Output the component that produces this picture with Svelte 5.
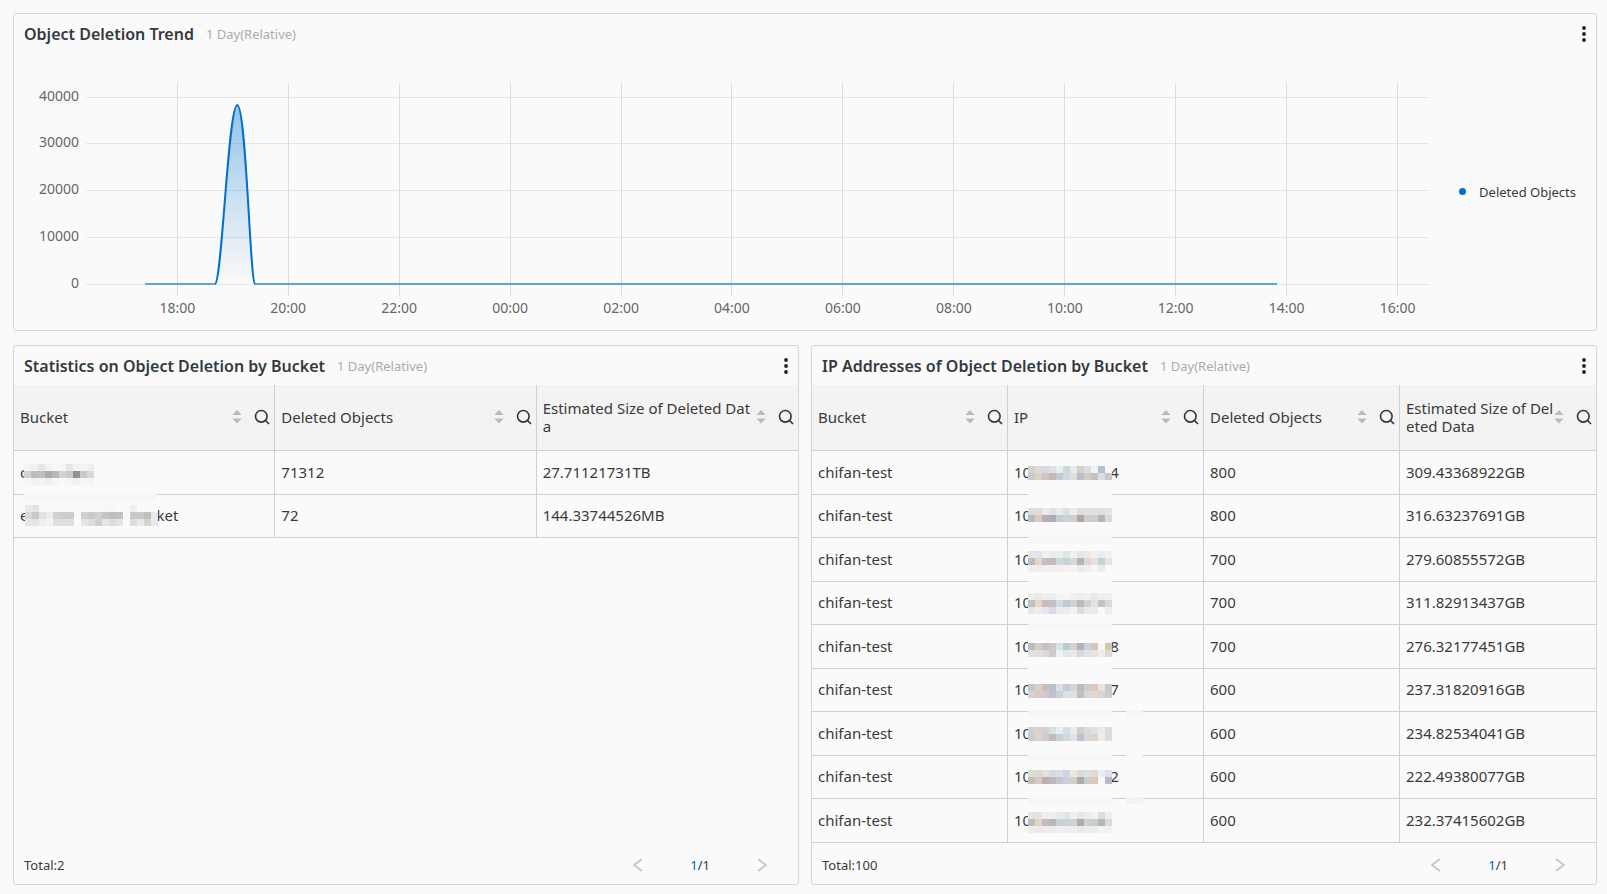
<script lang="ts">
	interface Mosaic {
		y: number;
		rows: string[];
		cover?: number;
		band?: string;
		patch?: string;
	}

	interface Cell {
		text: string;
		mosaic?: Mosaic;
		tail?: string;
	}

	const BG = '#fafafa';
	const BLOCK = 7;
	const ROW = 44;

	let chartWidth = $state(1414);

	const plotLeft = 72;
	const plotWidth = $derived(chartWidth - plotLeft);

	const yTicks = [
		{ label: '40000', y: 44 },
		{ label: '30000', y: 90 },
		{ label: '20000', y: 137 },
		{ label: '10000', y: 184 },
		{ label: '0', y: 231 }
	];

	const xTicks = ['18:00', '20:00', '22:00', '00:00', '02:00', '04:00', '06:00', '08:00', '10:00', '12:00', '14:00', '16:00'];

	// share of the plot width for an hour counted from 18:00
	const at = (hour: number) => plotLeft + plotWidth * (0.068 + hour * 0.0413);

	const start = $derived(at(-0.58));
	const rise = $derived(at(0.68));
	const peak = $derived(at(1.08));
	const fall = $derived(at(1.4));
	const end = $derived(at(19.83));
	const spike = $derived(
		`M${rise} 231 C${rise + 7} 229 ${peak - 9} 52 ${peak} 52 C${peak + 9} 52 ${fall - 5} 229 ${fall} 231`
	);

	const bucketHeads = ['Bucket', 'Deleted Objects', 'Estimated Size of Deleted Data'];
	const ipHeads = ['Bucket', 'IP', 'Deleted Objects', 'Estimated Size of Deleted Data'];

	const bucketRows: Cell[][] = [
		[
			{
				text: 'c',
				mosaic: {
					y: 12,
					cover: 19,
					band: '#f5f6f6',
					rows: [
						'f4f4f4 f0f0f0 e6e6e6 f2f2f2 f7f7f7 f5f5f5 e6e6e6 f2f2f2 f4f4f4 eeeeee',
						'd2d2d2 bdbdbd c0c0c0 acacac b8b8b8 d3d3d3 cacaca 929292 c8c8c8 d8d8d8',
						'f6f6f6 f3f3f3 f3f3f3 eeeeee f5f5f5 f8f8f8 f5f5f5 f0f0f0 f6f6f6 f4f4f4'
					]
				}
			},
			{ text: '71312' },
			{ text: '27.71121731TB' }
		],
		[
			{
				text: 'e',
				tail: 'ket',
				mosaic: {
					y: 10,
					rows: [
						'e8e8e8 e2e2e2 f8f8f8 fafafa f9f9f9 f9f9f9 f9f9f9 fafafa f9f9f9 fafafa f9f9f9 f7f7f7 f8f8f8 fafafa fafafa f0f0f0 f9f9f9 f8f8f8 fafafa',
						'd8d8d8 c8c8c8 e3e3e3 eeeeee d2d2d2 cdcdcd cccccc f9f9f9 d0d0d0 c9c9c9 d0d0d0 c4c4c4 bebebe c2c2c2 f9f9f9 c8c8c8 c9c9c9 bebebe e8e8e8',
						'e8e8e8 e5e5e5 eeeeee f3f3f3 e0e0e0 e0e0e0 e0e0e0 fafafa e4e4e4 dddddd cecece e4e4e4 dcdcdc e4e4e4 fafafa dddddd e8e8e8 d3d3d3 e8e8e8'
					]
				}
			},
			{ text: '72' },
			{ text: '144.33744526MB' }
		]
	];

	const mosaics: Mosaic[] = [
		{
			y: 14,
			rows: [
				'd8d0c8 dcdbdb e0d6d8 dcdfe8 e8edef cddadb e9ebea d7cfcd dbdde4 f0f3f1 b0c2d8 f8f8f8',
				'c8cccb ddd3c4 d0c6c8 c3bab4 c3cbd3 ccdbe2 e2ddd8 b9bdca cdcdce c2c3c2 dddce0 cec5c8'
			]
		},
		{
			y: 13,
			band: '#f5f6f6',
			rows: [
				'dcdcd8 dddddb eee9e3 dfe0e5 e7ebee dadee5 ededeb dddddd dedfdf dfe0e3 dddfdd e3e6e5',
				'bcbdba d8cbc7 bbadb7 aaadb7 c7cccd c5d5d9 d7cdc5 aca8a5 cecdcf cdcdd1 b2b7ba d8dcdf'
			]
		},
		{
			y: 12,
			rows: [
				'ece2dd e3e4e9 eff0ef eaeaec eeeded dfe4e7 f1f0ef ece2e2 eaeaed f6eee8 e6eef5 eff2f3',
				'babfbb e3d7c7 cabbc0 bebcc0 ccd8de c5d4db dfd5d0 b0b5b9 d7d9dc e5e2df c1d3d9 e2e5ea',
				'f0efed ededed f0f0ef f3f1f0 f5ecec f2f3f3 f5f4f3 eceaec eff0ef f6f6f6 ecebec f8f8f8'
			]
		},
		{
			y: 11,
			band: '#f5f6f6',
			rows: [
				'eeeeed e9e9ea efeeed ebecee f3f4f4 f6f6f6 f0f0ef ededee f0f0ee e8e7e6 eeeeed f0f0f0',
				'bdc2bd e3d7c7 cabbc0 c0c1c4 cfdce0 bec9d3 d7d0d0 b7bcba ced4d6 e3e3e2 c1c6c3 d4d9d9',
				'ece4df eeebe8 e4e6eb dadae4 e8ecf0 e8efef f1f1ef e0dcde f0e9e2 e6ebee f9faf6 ededed'
			]
		},
		{
			y: 17,
			rows: [
				'bbbdb8 d5cdc8 cabfc7 ccc9cc d8e4e4 bccbd1 d6d1cf b4b3b8 cbd0da d6c5b7 f4f7f8 d6c6ad',
				'e2e0da e3dedb dadada cdcaca edf0ef dfe9ec eae8e7 d9d8df e0e3e5 e9e3dc f0eeec e0d7d8'
			]
		},
		{
			y: 15,
			band: '#f5f5f5',
			patch: '#f4f5f5',
			rows: [
				'c5c9c6 d9d0c9 cebdc0 b9c0cd dbe0e7 c4cbd7 dbd3ce bfbcb4 c8d0d7 dec7b9 e7e4e5 c9c9c8',
				'd9d1cd d5ccc7 cfc9cd c2bfc8 cbcfdc d7e3e5 e2e1df c0bdc7 dbd6d3 e2d7ce d8d5d9 d0cccc'
			]
		},
		{
			y: 14,
			band: '#f6f6f6',
			patch: '#f9f9f9',
			rows: [
				'd0d1cd d4d2d2 d7cfd1 d8dee5 e8eeed d6dbe3 e9ebea d4ccca dcd9d9 dee1ea f2e9e6 dddada',
				'cbcdc8 ded3ca cecacf c2bbb6 c8ced3 d0d9de e4e1dd bfbfd2 d5d7dc dfd3c6 eeeceb e1dada'
			]
		},
		{
			y: 14,
			band: '#f6f6f6',
			patch: '#f4f4f4',
			rows: [
				'dadcd6 d9d8d5 e8e1da d7d9df d7dfe8 d0d3dd ebe7e2 d9d9d9 dce0e4 e5d7cf e6eef9 dedde9',
				'c4bdba d4cac4 baaeb8 bdb8bd c4c8c8 c4d4dc d6cfc7 aeaaa8 cccccd d8c9bb f8f9f8 bbb8cb'
			]
		},
		{
			y: 12,
			rows: [
				'e8e5dc e1e3e5 eeeeed edeeee e9eaeb dfe4e6 efefef e8e5e7 eaebec f2f2ef d8dce5 eeeeee',
				'bcbfba e3d4c5 c9bac0 b5b8b7 cbcfd2 c3d4da d7cdcb acaeb4 ced1d4 cdcdc8 b1b8b8 d8dddb',
				'ededed ebebeb ededed ececea f2f0ef eeeeee efefee e9e9e9 ececec ededed f2f3f3 f2f2f2'
			]
		}
	];

	const ipData = [
		['4', '800', '309.43368922GB'],
		['', '800', '316.63237691GB'],
		['', '700', '279.60855572GB'],
		['', '700', '311.82913437GB'],
		['8', '700', '276.32177451GB'],
		['7', '600', '237.31820916GB'],
		['', '600', '234.82534041GB'],
		['2', '600', '222.49380077GB'],
		['', '600', '232.37415602GB']
	];

	const ipRows: Cell[][] = ipData.map(([tail, count, size], i) => [
		{ text: 'chifan-test' },
		{ text: '10', tail, mosaic: mosaics[i] },
		{ text: count },
		{ text: size }
	]);
</script>

{#snippet heading(title: string)}
	<header class="panel-head">
		<h2>{title}</h2>
		<span class="range">1 Day(Relative)</span>
		<button class="more" type="button" aria-label="More actions">
			<svg width="4" height="16" viewBox="0 0 4 16">
				<circle cx="2" cy="2" r="1.9" />
				<circle cx="2" cy="8" r="1.9" />
				<circle cx="2" cy="14" r="1.9" />
			</svg>
		</button>
	</header>
{/snippet}

{#snippet pixels(m: Mosaic, last: boolean)}
	{@const cols = m.rows[0].split(' ').length}
	{@const cover = (m.cover ?? cols) * BLOCK}
	<svg class="mosaic" width={cols * BLOCK} height="40" shape-rendering="crispEdges" aria-hidden="true">
		<rect y="6" width={cover} height={last ? 30 : 44} fill={BG} />
		{#if m.band}
			<rect y={ROW - 3} width={cover} height={BLOCK} fill={m.band} />
		{/if}
		{#if m.patch}
			<rect x="98" y={ROW - 3} width="17" height={BLOCK} fill={m.patch} />
		{/if}
		{#each m.rows as line, r}
			{#each line.split(' ') as color, c}
				<rect x={c * BLOCK} y={m.y + r * BLOCK} width={BLOCK} height={BLOCK} fill="#{color}" />
			{/each}
		{/each}
	</svg>
{/snippet}

{#snippet grid(heads: string[], rows: Cell[][])}
	<div class="table-wrap">
		<table>
			<thead>
				<tr>
					{#each heads as head}
						<th scope="col">
							<div class="head-cell">
								<span class="head-text">{head}</span>
								<button class="sort" type="button" aria-label="Sort by {head}">
									<svg width="10" height="14" viewBox="0 0 10 14">
										<path d="M5 0 9.7 5H0.3z M0.3 8.5H9.7L5 13.5z" />
									</svg>
								</button>
								<button class="search" type="button" aria-label="Search {head}">
									<svg width="16" height="16" viewBox="0 0 16 16">
										<circle cx="7.3" cy="7.3" r="5.8" />
										<path d="M11.5 11.5 15 15" />
									</svg>
								</button>
							</div>
						</th>
					{/each}
				</tr>
			</thead>
			<tbody>
				{#each rows as row, i}
					<tr>
						{#each row as cell}
							<td>
								{#if cell.mosaic}
									<div class="masked">
										<span>{cell.text}</span>
										{@render pixels(cell.mosaic, i === rows.length - 1)}
										{#if cell.tail}<span class="tail">{cell.tail}</span>{/if}
									</div>
								{:else}
									{cell.text}
								{/if}
							</td>
						{/each}
					</tr>
				{/each}
			</tbody>
		</table>
	</div>
{/snippet}

{#snippet footer(total: number)}
	<footer class="panel-foot">
		<span>Total:{total}</span>
		<nav class="pager" aria-label="Pages">
			<button type="button" aria-label="Previous page">
				<svg width="10" height="14" viewBox="0 0 10 14"><path d="M9 1 1 7l8 6" /></svg>
			</button>
			<span class="page"><b>1</b>/1</span>
			<button type="button" aria-label="Next page">
				<svg width="10" height="14" viewBox="0 0 10 14"><path d="m1 1 8 6-8 6" /></svg>
			</button>
		</nav>
	</footer>
{/snippet}

<main class="dashboard">
	<section class="panel">
		{@render heading('Object Deletion Trend')}
		<div class="chart">
			<div class="plot" bind:clientWidth={chartWidth}>
				<svg width="100%" height="277" role="img" aria-label="Deleted objects over one day">
					<defs>
						<linearGradient id="fill" x1="0" y1="0" x2="0" y2="1">
							<stop offset="0" stop-color="#0070cc" stop-opacity="0.4" />
							<stop offset="1" stop-color="#0070cc" stop-opacity="0" />
						</linearGradient>
					</defs>
					<g class="gridlines">
						{#each yTicks as tick}
							<line x1={plotLeft} x2={chartWidth} y1={tick.y} y2={tick.y} />
						{/each}
						{#each xTicks as _, i}
							<line class="vertical" x1={at(i * 2)} x2={at(i * 2)} y1="30" y2="243" />
						{/each}
					</g>
					{#each yTicks as tick}
						<text x="65" y={tick.y + 4} text-anchor="end">{tick.label}</text>
					{/each}
					{#each xTicks as label, i}
						<text x={at(i * 2)} y="260" text-anchor="middle">{label}</text>
					{/each}
					<path d="{spike} Z" fill="url(#fill)" />
					<path class="base" d="M{start} 231H{rise} M{fall} 231H{end}" />
					<path class="curve" d={spike} />
				</svg>
			</div>
			<div class="legend">
				<span class="dot"></span>
				<span>Deleted Objects</span>
			</div>
		</div>
	</section>

	<div class="tables">
		<section class="panel">
			{@render heading('Statistics on Object Deletion by Bucket')}
			{@render grid(bucketHeads, bucketRows)}
			{@render footer(2)}
		</section>
		<section class="panel">
			{@render heading('IP Addresses of Object Deletion by Bucket')}
			{@render grid(ipHeads, ipRows)}
			{@render footer(100)}
		</section>
	</div>
</main>

<style>
	:global(body) {
		background: #f9f9f9;
	}

	.dashboard {
		display: flex;
		flex-direction: column;
		gap: 14px;
		box-sizing: border-box;
		min-height: 100vh;
		padding: 13px 10px 9px 13px;
		font-family: 'Noto Sans', 'Open Sans', sans-serif;
		font-size: 14px;
		line-height: 18px;
		color: #3a3a3a;
	}

	.panel {
		display: flex;
		flex-direction: column;
		min-width: 0;
		background: #fafafa;
		border: 1px solid #d4d6da;
		border-radius: 3px;
	}

	.tables {
		display: grid;
		grid-template-columns: 1fr 1fr;
		gap: 12px;
		flex: 1;
	}

	button {
		display: flex;
		padding: 0;
		border: 0;
		background: none;
		cursor: pointer;
	}

	/* Panel header */
	.panel-head {
		display: flex;
		align-items: center;
		gap: 12px;
		box-sizing: border-box;
		height: 39px;
		padding: 0 10px;
	}

	h2 {
		margin: 0;
		font-size: 16px;
		font-weight: 600;
		color: #333a3f;
		white-space: nowrap;
	}

	.range {
		font-size: 13px;
		color: #aaa;
		white-space: nowrap;
	}

	.more {
		margin-left: auto;
	}

	.more svg {
		fill: #222;
	}

	/* Chart */
	.chart {
		display: flex;
		align-items: center;
		gap: 30px;
		padding-right: 20px;
	}

	.plot {
		flex: 1;
		min-width: 0;
	}

	.plot svg {
		display: block;
	}

	.plot text {
		font-size: 14px;
		fill: #666;
	}

	.gridlines line {
		stroke: #e6e6e6;
		shape-rendering: crispEdges;
	}

	.gridlines .vertical {
		stroke: #dcdcdc;
	}

	.base {
		fill: none;
		stroke: #5ea3da;
		stroke-width: 2;
	}

	.curve {
		fill: none;
		stroke: #0070cc;
		stroke-width: 2;
	}

	.legend {
		display: flex;
		align-items: center;
		gap: 13px;
		font-size: 13px;
		white-space: nowrap;
	}

	.dot {
		width: 7px;
		height: 7px;
		border-radius: 50%;
		background: #0070cc;
	}

	/* Tables */
	.table-wrap {
		flex: 1;
	}

	table {
		width: 100%;
		table-layout: fixed;
		border-collapse: separate;
		border-spacing: 0;
		font-size: 15px;
	}

	th,
	td {
		box-sizing: border-box;
		padding: 0 0 2px 6px;
		border-bottom: 1px solid #cdd0d4;
		border-right: 1px solid #cdd0d4;
		text-align: left;
		font-weight: 400;
	}

	th:last-child,
	td:last-child {
		border-right: 0;
	}

	th {
		height: 66px;
		background: #f3f3f3;
	}

	td {
		height: 43px;
	}

	tbody tr:nth-child(odd) td {
		height: 44px;
	}

	.head-cell {
		display: flex;
		align-items: center;
		padding-right: 4px;
	}

	.head-text {
		flex: 1;
		word-break: break-all;
	}

	.sort svg {
		fill: #bbb;
	}

	.search {
		margin-left: 12px;
	}

	.search svg {
		fill: none;
		stroke: #333;
		stroke-width: 1.6;
	}

	.masked {
		display: flex;
		align-items: center;
		height: 40px;
	}

	.mosaic {
		position: relative;
		flex: none;
		margin-left: -3px;
		overflow: visible;
	}

	.tail {
		margin-left: -2px;
	}

	/* Panel footer */
	.panel-foot {
		display: flex;
		align-items: center;
		justify-content: space-between;
		height: 38px;
		padding: 0 31px 0 10px;
		font-size: 13px;
	}

	.pager {
		display: flex;
		align-items: center;
		gap: 47px;
	}

	.pager svg {
		fill: none;
		stroke: #c4c4c4;
		stroke-width: 1.6;
	}

	.page b {
		font-weight: 400;
		color: #0064c8;
	}
</style>
